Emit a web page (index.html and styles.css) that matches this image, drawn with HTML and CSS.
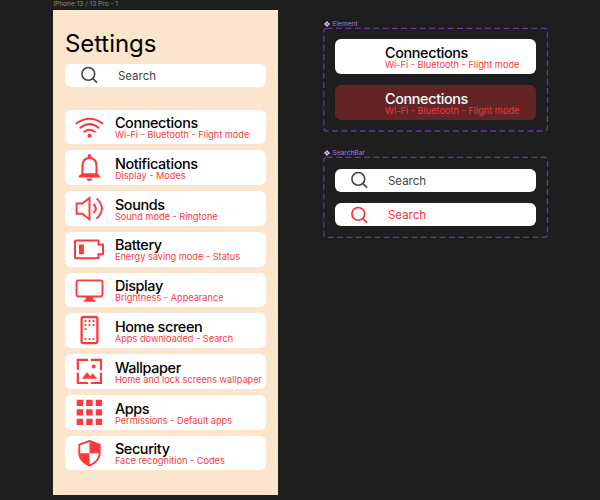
FILE: index.html
```html
<!DOCTYPE html>
<html lang="en">
<head>
<meta charset="utf-8">
<title>Settings</title>
<link rel="stylesheet" href="styles.css">
</head>
<body>
<svg width="0" height="0" class="defs">
  <symbol id="search" viewBox="0 0 18 18"><g fill="none" stroke="currentColor" stroke-width="1.6"><circle cx="8.3" cy="7.9" r="6.4"/><path d="M12.800 12.400 17 16.600"/></g></symbol>
  <symbol id="comp" viewBox="0 0 6 6"><path fill="currentColor" d="M3 0 4.4 1.4 3 2.8 1.6 1.4ZM3 3.2 4.4 4.6 3 6 1.6 4.6ZM1.4 1.6 2.8 3 1.4 4.4 0 3ZM4.6 1.6 6 3 4.6 4.4 3.2 3Z"/></symbol>
</svg>
<main class="canvas">
  <section class="frame">
    <div class="frame-label">iPhone 13 / 13 Pro - 1</div>
    <div class="phone">
      <h1>Settings</h1>
      <div class="search"><svg><use href="#search"/></svg><span>Search</span></div>
      <div class="list">
        <div class="item"><svg viewBox="0 0 34 34"><g fill="none" stroke="currentColor" stroke-width="2" stroke-linecap="round"><path d="M4.5 13.3Q17.5 4 30.5 13.3"/><path d="M8.3 17.7Q17.5 10.6 26.7 17.7"/><path d="M12.3 21.7Q17.5 18 22.7 21.7"/></g><circle cx="17.5" cy="25.7" r="2" fill="currentColor"/></svg><div><b>Connections</b><i>Wi-Fi - Bluetooth - Flight mode</i></div></div>
        <div class="item"><svg viewBox="0 0 34 34"><path d="M10.5 25V15.5Q11 8 17.5 8T24.5 15.5V25" fill="none" stroke="currentColor" stroke-width="2.1"/><path fill="currentColor" d="M15.8 5.7a1.7 1.7 0 0 1 3.4 0V8.5H15.8ZM10 23.3h15l3.3 2.6v1.6H6.7v-1.6ZM14.6 28.6h5.8a2.9 2.4 0 0 1-5.8 0Z"/></svg><div><b>Notifications</b><i>Display - Modes</i></div></div>
        <div class="item"><svg viewBox="0 0 34 34"><g fill="none" stroke="currentColor" stroke-width="1.9"><path d="M4.6 12.5h5.7l7.2-5.6v21.4l-7.2-5.6H4.6Z"/><path d="M21.5 13q4.6 4.6 0 9.2M24.6 7.4q10.6 10.2 0 20.4"/></g></svg><div><b>Sounds</b><i>Sound mode - Ringtone</i></div></div>
        <div class="item"><svg viewBox="0 0 34 34"><path d="M4 8.5h22.5v4H31v9.7h-4.5v4H4a1 1 0 0 1-1-1V9.5a1 1 0 0 1 1-1Z" fill="none" stroke="currentColor" stroke-width="2"/><path fill="currentColor" d="M7 12.5h4.9v9.7H7Z"/></svg><div><b>Battery</b><i>Energy saving mode - Status</i></div></div>
        <div class="item"><svg viewBox="0 0 34 34"><rect x="4.5" y="7.3" width="26" height="16.2" rx="2.2" fill="none" stroke="currentColor" stroke-width="1.8"/><path fill="currentColor" d="M14 23.5h7.2v2.7l2.3 1.3v1.3H11.7v-1.3l2.3-1.3Z"/></svg><div><b>Display</b><i>Brightness - Appearance</i></div></div>
        <div class="item"><svg viewBox="0 0 34 34"><rect x="9.6" y="4" width="15.8" height="26.2" rx="2.3" fill="none" stroke="currentColor" stroke-width="2.3"/><path fill="none" stroke="currentColor" stroke-width="2.2" stroke-linecap="round" d="M13.5 8.2h0M17.5 8.2h0M21.5 8.2h0M13.5 12.2h0M17.5 12.2h0M21.5 12.2h0M13.5 16.2h0M13.5 26h0M17.5 26h0M21.5 26h0"/></svg><div><b>Home screen</b><i>Apps downloaded - Search</i></div></div>
        <div class="item"><svg viewBox="0 0 34 34"><path fill="none" stroke="currentColor" stroke-width="2.2" d="M5.8 16V5.8H16M18.8 5.8h10.2V16M29 18.8V29H18.8M16 29H5.8V18.8"/><circle cx="21.7" cy="12.5" r="2.1" fill="currentColor"/><path fill="currentColor" d="M9.8 24.7 15 18.3l3.3 4 2.4-3 4.5 5.4Z"/></svg><div><b>Wallpaper</b><i>Home and lock screens wallpaper</i></div></div>
        <div class="item"><svg viewBox="0 0 34 34"><path fill="currentColor" d="M4.7 4.7h6.4v6.4H4.7zM14.2 4.7h6.4v6.4h-6.4zM23.7 4.7h6.4v6.4h-6.4zM4.7 14.2h6.4v6.4H4.7zM14.2 14.2h6.4v6.4h-6.4zM23.7 14.2h6.4v6.4h-6.4zM4.7 23.7h6.4v6.4H4.7zM14.2 23.7h6.4v6.4h-6.4zM23.7 23.7h6.4v6.4h-6.4z"/></svg><div><b>Apps</b><i>Permissions - Default apps</i></div></div>
        <div class="item"><svg viewBox="0 0 34 34"><path fill="none" stroke="currentColor" stroke-width="1.9" stroke-linejoin="round" d="M17.5 5 27.7 8.7v9.6q-1 7.4-10.2 11.2Q8.3 25.7 7.3 18.3V8.7Z"/><path fill="currentColor" d="M17.500 5 27.700 8.700V17.300H17.500ZM7.300 17.300H17.500V29.500Q7.300 25.500 7.300 17.300Z"/></svg><div><b>Security</b><i>Face recognition - Codes</i></div></div>
      </div>
    </div>
  </section>
  <section class="components">
    <div class="comp-label"><svg><use href="#comp"/></svg>Element</div>
    <div class="set set-element">
      <svg class="dash"><rect x=".8" y=".3" width="223.7" height="102.7" rx="3"/></svg>
      <div class="item"><div><b>Connections</b><i>Wi-Fi - Bluetooth - Flight mode</i></div></div>
      <div class="item dark"><div><b>Connections</b><i>Wi-Fi - Bluetooth - Flight mode</i></div></div>
    </div>
    <div class="comp-label second"><svg><use href="#comp"/></svg>SearchBar</div>
    <div class="set set-search">
      <svg class="dash"><rect x=".8" y=".3" width="223.7" height="80" rx="3"/></svg>
      <div class="search"><svg><use href="#search"/></svg><span>Search</span></div>
      <div class="search active"><svg><use href="#search"/></svg><span>Search</span></div>
    </div>
  </section>
</main>
</body>
</html>
```
FILE: styles.css
```css
* { box-sizing: border-box; }
body { margin: 0; background: #1e1e1e; font-family: Inter, sans-serif; }
.defs { display: block; }
.canvas { display: flex; width: 600px; height: 500px; padding-left: 53.4px; overflow: hidden; }
.frame { width: 224.6px; }
.frame-label { height: 9.6px; font-size: 6.6px; line-height: 9px; color: #8c8c8c; white-space: nowrap; }
.phone { height: 485px; background: #fce5cd; padding: 19.4px 11.5px 0; }
h1 { margin: 0; height: 34.6px; font-size: 24px; line-height: 29px; font-weight: 400; letter-spacing: -.06px; color: #000; }
.search { display: flex; align-items: center; width: 201.2px; height: 23.2px; border-radius: 6px; background: #fff; color: #444; font-size: 11.5px; line-height: 14px; padding-left: 15.4px; }
.search svg { width: 18px; height: 18px; }
.search span { margin-left: 19.6px; padding-top: 1px; }
.search.active { color: #fa3236; }
.list { display: flex; flex-direction: column; gap: 6.2px; margin-top: 22.8px; }
.item { display: flex; width: 201.2px; height: 34.6px; padding-left: 7px; border-radius: 6px; background: #fff; color: #fa3a3e; white-space: nowrap; }
.item > svg { flex: none; width: 34px; height: 34px; }
.item > div { margin-left: 9px; padding-top: 6.5px; }
.item b { display: block; height: 13px; font-size: 14.4px; line-height: 13px; font-weight: 500; letter-spacing: -.36px; color: #000; }
.item i { display: block; font-size: 9.2px; line-height: 11px; font-style: normal; }
.components { margin-left: 45px; padding-top: 19px; }
.comp-label { display: flex; align-items: center; gap: 2.5px; height: 9px; padding-left: 1px; font-size: 6.6px; color: #a57cd0; }
.comp-label svg { width: 6px; height: 6px; color: #d8b8fa; }
.comp-label.second { margin-top: 16px; }
.set { position: relative; display: flex; flex-direction: column; width: 225px; padding: 11.3px 0 0 12px; }
.set-element { height: 104px; gap: 11.4px; }
.set-element .item > div { margin-left: 43px; }
.set-search { height: 82px; gap: 11.4px; padding-top: 11.5px; }
.item.dark { background: #622424; color: #e8393d; }
.item.dark b { color: #fff; }
.dash { position: absolute; left: 0; top: 0; width: 225px; height: 104px; overflow: visible; }
.dash rect { fill: none; stroke: #64399e; stroke-width: 1.3; stroke-dasharray: 6 3.3; }
```
